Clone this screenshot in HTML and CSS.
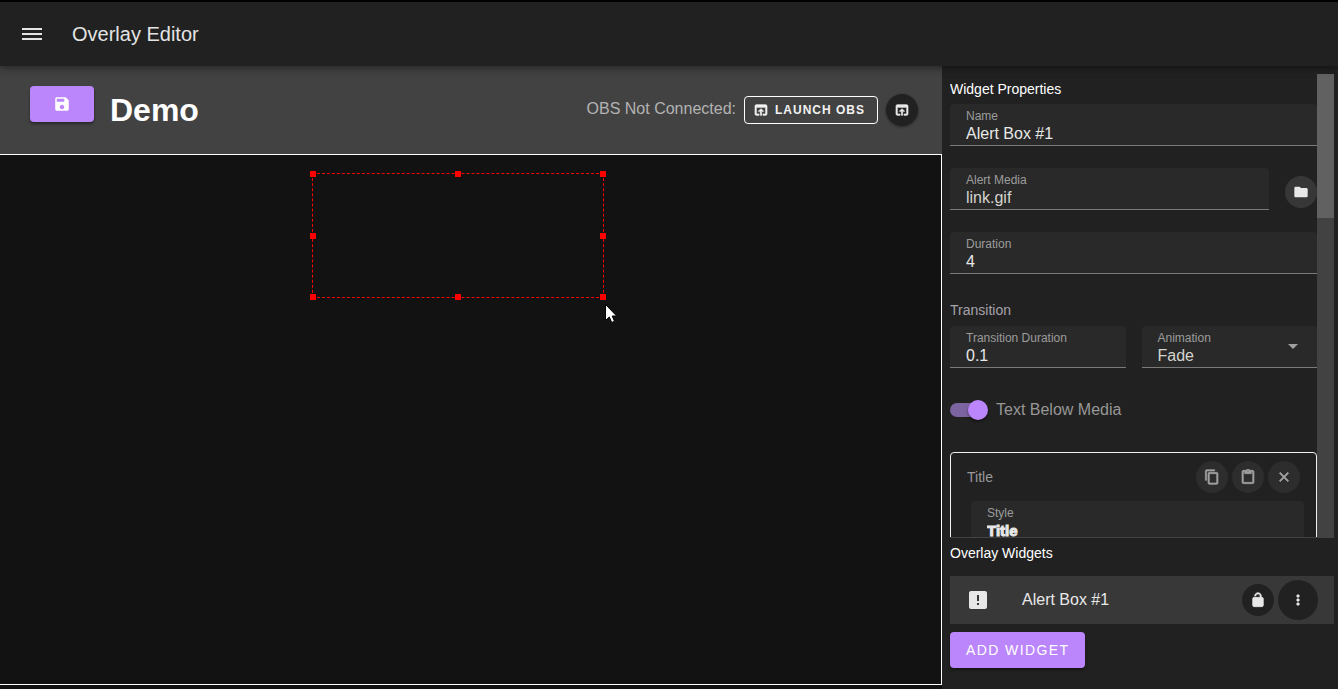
FILE: index.html
```html
<!DOCTYPE html>
<html lang="en">
<head>
<meta charset="utf-8">
<title>Overlay Editor</title>
<link rel="stylesheet" href="styles.css">
</head>
<body>
<header class="app-bar">
  <button class="menu-button" type="button" aria-label="Menu"><svg class="icon-24" viewBox="0 0 24 24"><path d="M2 18h20v-2H2v2zm0-5h20v-2H2v2zm0-7v2h20V6H2z"/></svg></button>
  <span class="app-title">Overlay Editor</span>
</header>
<main class="workspace">
  <section class="editor">
    <div class="toolbar">
      <button class="button-primary save" type="button" aria-label="Save"><svg class="icon-18" viewBox="0 0 24 24"><path d="M17 3H5c-1.11 0-2 .9-2 2v14c0 1.1.89 2 2 2h14c1.1 0 2-.9 2-2V7l-4-4zm-5 16c-1.66 0-3-1.34-3-3s1.34-3 3-3 3 1.34 3 3-1.34 3-3 3zm3-10H5V5h10v4z"/></svg></button>
      <h1 class="overlay-name">Demo</h1>
      <span class="status">OBS Not Connected:</span>
      <button class="launch" type="button"><svg class="icon-16" viewBox="0 0 24 24"><path d="M19 4H5c-1.11 0-2 .9-2 2v12c0 1.1.89 2 2 2h4v-2H5V8h14v10h-4v2h4c1.1 0 2-.9 2-2V6c0-1.1-.89-2-2-2zm-7 6l-4 4h3v6h2v-6h3l-4-4z"/></svg>LAUNCH OBS</button>
      <button class="round dark raised" type="button" aria-label="Open in browser"><svg class="icon-16" viewBox="0 0 24 24"><path d="M19 4H5c-1.11 0-2 .9-2 2v12c0 1.1.89 2 2 2h4v-2H5V8h14v10h-4v2h4c1.1 0 2-.9 2-2V6c0-1.1-.89-2-2-2zm-7 6l-4 4h3v6h2v-6h3l-4-4z"/></svg></button>
    </div>
    <div class="canvas">
      <div class="selection">
        <i class="handle top left"></i><i class="handle top center"></i><i class="handle top right"></i>
        <i class="handle middle left"></i><i class="handle middle right"></i>
        <i class="handle bottom left"></i><i class="handle bottom center"></i><i class="handle bottom right"></i>
      </div>
      <svg class="pointer" viewBox="0 0 12 19"><path d="M.5.5v16l3.8-3.5 2.4 5.5 2.8-1.2L7.2 12h4.5z"/></svg>
    </div>
  </section>
  <aside class="sidebar">
    <div class="properties">
      <form class="form">
        <h2 class="heading">Widget Properties</h2>
        <div class="field"><label for="name">Name</label><input id="name" type="text" value="Alert Box #1"></div>
        <div class="row">
          <div class="field"><label for="media">Alert Media</label><input id="media" class="muted" type="text" value="link.gif"></div>
          <button class="round folder" type="button" aria-label="Choose file"><svg class="icon-16" viewBox="0 0 24 24"><path d="M10 4H4c-1.1 0-1.99.9-1.99 2L2 18c0 1.1.9 2 2 2h16c1.1 0 2-.9 2-2V8c0-1.1-.9-2-2-2h-8l-2-2z"/></svg></button>
        </div>
        <div class="field"><label for="duration">Duration</label><input id="duration" type="text" value="4"></div>
        <h3 class="subheading">Transition</h3>
        <div class="row transition">
          <div class="field"><label for="tduration">Transition Duration</label><input id="tduration" type="text" value="0.1"></div>
          <div class="field"><label for="animation">Animation</label><select id="animation" class="muted"><option>Fade</option></select><svg class="arrow" viewBox="0 0 10 5"><path d="M0 0h10L5 5z"/></svg></div>
        </div>
        <div class="switch-row"><input id="below" class="switch" type="checkbox" checked><label for="below">Text Below Media</label></div>
        <div class="card">
          <div class="card-head">
            <span class="card-title">Title</span>
            <button class="round soft" type="button" aria-label="Copy"><svg class="icon-16" viewBox="0 0 24 24"><path d="M16 1H4c-1.1 0-2 .9-2 2v14h2V3h12V1zm3 4H8c-1.1 0-2 .9-2 2v14c0 1.1.9 2 2 2h11c1.1 0 2-.9 2-2V7c0-1.1-.9-2-2-2zm0 16H8V7h11v14z"/></svg></button>
            <button class="round soft" type="button" aria-label="Paste"><svg class="icon-16" viewBox="0 0 24 24"><path d="M19 2h-4.180C14.400.840 13.300 0 12 0c-1.300 0-2.400.840-2.820 2H5c-1.100 0-2 .9-2 2v16c0 1.100.9 2 2 2h14c1.100 0 2-.9 2-2V4c0-1.100-.9-2-2-2zm-7 0c.55 0 1 .450 1 1s-.450 1-1 1-1-.450-1-1 .450-1 1-1zm7 18H5V4h2v3h10V4h2v16z"/></svg></button>
            <button class="round soft" type="button" aria-label="Remove"><svg class="icon-16" viewBox="0 0 24 24"><path d="M19 6.410L17.590 5 12 10.590 6.410 5 5 6.410 10.590 12 5 17.590 6.410 19 12 13.410 17.590 19 19 17.590 13.410 12z"/></svg></button>
          </div>
          <div class="field style-field"><label for="style">Style</label><input id="style" class="impact" type="text" value="Title"></div>
        </div>
      </form>
      <div class="scroll-track"><div class="scroll-thumb"></div></div>
    </div>
    <div class="widgets">
      <h2 class="heading">Overlay Widgets</h2>
      <div class="widget">
        <svg class="icon-24" viewBox="0 0 24 24"><path fill-rule="evenodd" d="M5 3h14c1.100 0 2 .9 2 2v14c0 1.100-.9 2-2 2H5c-1.100 0-2-.9-2-2V5c0-1.100.9-2 2-2zm6 4v6h2V7zm0 8v2h2v-2z"/></svg>
        <span class="widget-name">Alert Box #1</span>
        <button class="round dark" type="button" aria-label="Unlock"><svg class="icon-16" viewBox="0 0 24 24"><path d="M12 17c1.100 0 2-.9 2-2s-.9-2-2-2-2 .9-2 2 .9 2 2 2zm6-9h-1V6c0-2.760-2.240-5-5-5S7 3.240 7 6h1.900c0-1.710 1.390-3.100 3.100-3.100 1.710 0 3.100 1.390 3.100 3.100v2H6c-1.100 0-2 .9-2 2v10c0 1.100.9 2 2 2h12c1.100 0 2-.9 2-2V10c0-1.100-.9-2-2-2z"/></svg></button>
        <button class="round dark large" type="button" aria-label="More"><svg class="icon-16" viewBox="0 0 24 24"><path d="M12 8c1.100 0 2-.9 2-2s-.9-2-2-2-2 .9-2 2 .9 2 2 2zm0 2c-1.100 0-2 .9-2 2s.9 2 2 2 2-.9 2-2-.9-2-2-2zm0 6c-1.100 0-2 .9-2 2s.9 2 2 2 2-.9 2-2-.9-2-2-2z"/></svg></button>
      </div>
      <button class="button-primary add" type="button">ADD WIDGET</button>
    </div>
  </aside>
</main>
</body>
</html>
```
FILE: styles.css
```css
* { box-sizing: border-box; }
body {
  margin: 0;
  height: 100vh;
  display: flex;
  flex-direction: column;
  overflow: hidden;
  background: #121212;
  color: #fff;
  font-family: "Liberation Sans", Arial, sans-serif;
  font-size: 16px;
}
button, input, select { font: inherit; color: inherit; border: 0; margin: 0; padding: 0; background: none; }
button { display: flex; align-items: center; justify-content: center; flex: none; cursor: pointer; }
h1, h2, h3 { margin: 0; }
svg { display: block; flex: none; fill: currentColor; }
.icon-16 { width: 16px; height: 16px; stroke: currentColor; stroke-width: 1; }
.icon-18 { width: 18px; height: 18px; }
.icon-24 { width: 24px; height: 24px; }

.app-bar {
  position: relative;
  z-index: 2;
  flex: none;
  display: flex;
  align-items: center;
  gap: 28px;
  height: 66px;
  padding: 0 20px;
  border-top: 2px solid #000;
  background: #212121;
  box-shadow: 0 2px 8px rgba(0, 0, 0, .45);
  color: #e4e4e4;
}
.app-title { font-size: 20px; line-height: 24px; }

.workspace { flex: 1; min-height: 0; display: flex; }
.editor { flex: 1; min-width: 0; display: flex; flex-direction: column; padding-bottom: 4px; }
.toolbar {
  flex: none;
  display: flex;
  align-items: center;
  gap: 8px;
  height: 88px;
  padding: 0 24px 0 30px;
  background: #424242;
}
.button-primary {
  height: 36px;
  border-radius: 4px;
  background: #bb86fc;
  box-shadow: 0 2px 3px rgba(0, 0, 0, .4);
}
.save { width: 64px; margin-bottom: 12px; }
.overlay-name { flex: 1; padding-left: 8px; font-size: 32px; line-height: 40px; }
.status { color: #b3b3b3; padding-bottom: 2px; }
.launch {
  gap: 6px;
  width: 134px;
  height: 28px;
  padding-right: 4px;
  border: 1px solid #fff;
  border-radius: 4px;
  color: #f2f2f2;
  font-size: 12px;
  font-weight: 700;
  letter-spacing: 1px;
}
.round { width: 32px; height: 32px; border-radius: 50%; color: #e8e8e8; }
.dark { background: #212121; }
.raised { box-shadow: 0 1px 3px rgba(0, 0, 0, .4); }
.large { width: 40px; height: 40px; }
.folder { background: #373737; }
.folder svg { stroke: none; }
.soft { background: #2d2d2d; color: #a0a0a0; }

.canvas { position: relative; flex: 1; border: solid #fff; border-width: 1px 1px 1px 0; }
.selection { position: absolute; left: 312px; top: 18px; width: 292px; height: 125px; border: 1px dashed #f00; }
.handle { position: absolute; width: 6px; height: 6px; background: #f00; }
.top { top: -3px; }
.bottom { bottom: -3px; }
.left { left: -3px; }
.right { right: -3px; }
.center { left: calc(50% - 3px); }
.middle { top: calc(50% - 3px); }
.pointer { position: absolute; left: 605px; top: 149px; width: 12px; height: 19px; fill: #fff; stroke: #000; }

.sidebar {
  flex: none;
  display: flex;
  flex-direction: column;
  width: 396px;
  padding: 8px 4px 0 8px;
  background: #212121;
}
.properties { flex: 1; min-height: 0; display: flex; border-bottom: 1px solid #424242; }
.form { flex: 1; min-width: 0; overflow: hidden; }
.scroll-track { width: 17px; background: #424242; }
.scroll-thumb { height: 31%; background: #616161; }
.heading { font-size: 14px; font-weight: 400; line-height: 30px; }
.subheading { margin-top: -2px; font-size: 14px; font-weight: 400; line-height: 32px; color: #a6a2aa; }
.field {
  position: relative;
  display: flex;
  flex-direction: column;
  height: 42px;
  margin-bottom: 22px;
  padding: 5px 16px 0;
  border-bottom: 1px solid #7a7a7a;
  border-radius: 4px 4px 0 0;
  background: #292929;
}
.field label { font-size: 12px; line-height: 14px; color: #9c9c9c; }
.field input, .field select { width: 100%; height: 22px; line-height: 22px; outline: 0; appearance: none; color: #e8e8e8; }
.field .muted { color: #d4d4ce; }
.row { display: flex; gap: 16px; }
.row .field { flex: 1; min-width: 0; }
.row .round { margin-top: 8px; }
.arrow { position: absolute; right: 19px; top: 18px; width: 10px; height: 5px; fill: #a0a0a0; }
.switch-row { display: flex; align-items: center; gap: 8px; height: 40px; color: #979797; }
.switch { position: relative; appearance: none; width: 38px; height: 20px; }
.switch::before { content: ""; position: absolute; left: 0; top: 3px; width: 32px; height: 14px; border-radius: 7px; background: #7b64a0; }
.switch::after { content: ""; position: absolute; right: 0; top: 0; width: 20px; height: 20px; border-radius: 50%; background: #bb86fc; box-shadow: 0 2px 3px rgba(0, 0, 0, .4); }
.card { margin-top: 22px; padding-top: 8px; border: 1px solid #f0f0f0; border-radius: 4px; }
.card-head { display: flex; align-items: center; gap: 4px; padding: 0 16px; }
.card-title { flex: 1; font-size: 14px; color: #999; }
.style-field { margin: 8px 12px 22px 20px; }
.field .impact { font-family: Impact, "Liberation Sans Narrow", "Liberation Sans", sans-serif; font-size: 15px; font-weight: 700; -webkit-text-stroke: 1px currentColor; }

.widgets { flex: none; padding-bottom: 21px; }
.widget { display: flex; align-items: center; gap: 4px; height: 48px; margin: 8px 0; padding: 0 16px; background: #383838; color: #e8e8e8; }
.widget-name { flex: 1; padding-left: 28px; }
.add { padding: 0 16px; font-size: 14px; letter-spacing: .1em; }
```
